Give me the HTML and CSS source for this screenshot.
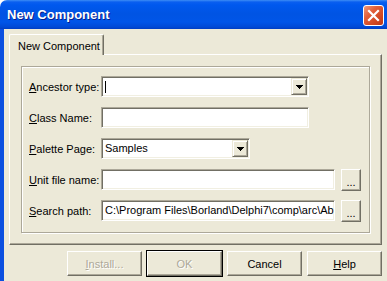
FILE: index.html
```html
<!DOCTYPE html>
<html lang="en">
<head>
    <meta charset="UTF-8">
    <title>New Component</title>
    <link rel="stylesheet" href="styles.css">
</head>
<body>
    <div class="window">
        <div class="titlebar">
            <span class="title">New Component</span>
            <span class="close">
                <svg width="13" height="13" viewBox="0 0 13 13"><path d="M2 2 L11 11 M11 2 L2 11" stroke="#fff" stroke-width="2.2" stroke-linecap="square"/></svg>
            </span>
        </div>
        <div class="frame">
            <div class="client">
                <div class="tabs"><div class="tab">New Component</div></div>
                <div class="page">
                    <div class="group">
                        <div class="row">
                            <label><u>A</u>ncestor type:</label>
                            <div class="field combo w-wide"><span class="caret"></span><span class="drop"><svg width="7" height="4" viewBox="0 0 7 4"><path d="M0 0h7v1H0zM1 1h5v1H1zM2 2h3v1H2zM3 3h1v1H3z" fill="#000"/></svg></span></div>
                        </div>
                        <div class="row">
                            <label><u>C</u>lass Name:</label>
                            <div class="field w-wide"></div>
                        </div>
                        <div class="row">
                            <label><u>P</u>alette Page:</label>
                            <div class="field combo w-mid"><span class="value">Samples</span><span class="drop"><svg width="7" height="4" viewBox="0 0 7 4"><path d="M0 0h7v1H0zM1 1h5v1H1zM2 2h3v1H2zM3 3h1v1H3z" fill="#000"/></svg></span></div>
                        </div>
                        <div class="row">
                            <label><u>U</u>nit file name:</label>
                            <div class="field w-path"></div>
                            <button class="btn dots">...</button>
                        </div>
                        <div class="row">
                            <label><u>S</u>earch path:</label>
                            <div class="field w-path"><span class="value">C:\Program Files\Borland\Delphi7\comp\arc\Ab</span></div>
                            <button class="btn dots">...</button>
                        </div>
                    </div>
                </div>
                <div class="buttons">
                    <button class="btn big disabled"><u>I</u>nstall...</button>
                    <button class="btn big disabled default">OK</button>
                    <button class="btn big">Cancel</button>
                    <button class="btn big"><u>H</u>elp</button>
                </div>
            </div>
        </div>
    </div>
</body>
</html>
```

FILE: styles.css
```css
body {
    margin: 0;
    background: #fff;
    overflow: hidden;
    font-family: 'Liberation Sans', Arial, sans-serif;
    font-size: 11px;
    color: #000;
}
.window {
    width: 387px;
    height: 281px;
    display: flex;
    flex-direction: column;
}
.titlebar {
    height: 29px;
    flex: none;
    display: flex;
    align-items: flex-start;
    justify-content: space-between;
    border-radius: 7px 0 0 0;
    background: linear-gradient(#3d8df5 0, #0a5ff0 2px, #0058ee 5px, #0054e3 14px, #0055e8 22px, #0049d6 27px, #003dc2 29px);
}
.title {
    margin: 7px 0 0 7px;
    color: #fff;
    font-weight: bold;
    font-size: 13px;
    line-height: 16px;
    text-shadow: 1px 1px 0 #0a1e8a;
}
.close {
    margin: 5px 3px 0 0;
    width: 19px;
    height: 19px;
    border: 1px solid #fff;
    border-radius: 3px;
    background: linear-gradient(135deg, #ef9a7c 0, #e2603b 35%, #cf4520 75%, #b8391a 100%);
    display: flex;
    align-items: center;
    justify-content: center;
}
.frame {
    flex: 1;
    display: flex;
    border-left: 4px solid #0b4fe0;
    box-shadow: inset 1px 0 0 #1466ee;
}
.client {
    flex: 1;
    background: #ece9d8;
    padding: 5px 5px 0 5px;
}
.tabs {
    display: flex;
    height: 20px;
}
.tab {
    box-sizing: border-box;
    width: 95px;
    height: 20px;
    padding: 5px 0 0 8px;
    line-height: 13px;
    border-top: 1px solid #fff;
    border-left: 1px solid #fff;
    border-right: 1px solid #716f64;
    box-shadow: inset -1px 0 0 #aca899;
    border-radius: 2px 2px 0 0;
    position: relative;
    z-index: 1;
    background: #ece9d8;
    margin-bottom: -1px;
    height: 21px;
}
.page {
    box-sizing: border-box;
    height: 191px;
    padding: 11px 11px 0 11px;
    border-top: 1px solid #fff;
    border-left: 1px solid #fff;
    border-right: 1px solid #716f64;
    border-bottom: 1px solid #716f64;
    box-shadow: inset -1px -1px 0 #aca899;
}
.group {
    box-sizing: border-box;
    height: 167px;
    border: 1px solid #aca899;
    box-shadow: inset 1px 1px 0 #fff, 1px 1px 0 #fff;
    padding: 9px 0 0 7px;
    display: flex;
    flex-direction: column;
    gap: 10px;
}
.row {
    display: flex;
    align-items: center;
    height: 21px;
}
.row label {
    width: 72px;
    flex: none;
    white-space: nowrap;
}
.field {
    box-sizing: border-box;
    height: 21px;
    background: #fff;
    border-top: 1px solid #aca899;
    border-left: 1px solid #aca899;
    border-right: 1px solid #fff;
    border-bottom: 1px solid #fff;
    box-shadow: inset 1px 1px 0 #716f64, inset -1px -1px 0 #f1efe2;
    display: flex;
    align-items: center;
    overflow: hidden;
    white-space: nowrap;
    padding-left: 3px;
}
.w-wide { width: 208px; }
.w-mid { width: 149px; }
.w-path { width: 234px; }
.value {
    flex: 1;
    overflow: hidden;
    line-height: 13px;
}
.caret {
    width: 1px;
    height: 12px;
    background: #000;
    margin-left: 0;
}
.combo {
    padding-right: 1px;
}
.combo .caret {
    margin-right: auto;
}
.drop {
    box-sizing: border-box;
    width: 16px;
    height: 17px;
    margin-left: auto;
    flex: none;
    background: #ece9d8;
    border-top: 1px solid #ece9d8;
    border-left: 1px solid #ece9d8;
    border-right: 1px solid #716f64;
    border-bottom: 1px solid #716f64;
    box-shadow: inset 1px 1px 0 #fff, inset -1px -1px 0 #aca899;
    display: flex;
    align-items: center;
    justify-content: center;
}
.btn {
    box-sizing: border-box;
    font-family: 'Liberation Sans', Arial, sans-serif;
    font-size: 11px;
    color: #000;
    background: #ece9d8;
    border-top: 1px solid #fff;
    border-left: 1px solid #fff;
    border-right: 1px solid #716f64;
    border-bottom: 1px solid #716f64;
    box-shadow: inset -1px -1px 0 #aca899;
    padding: 0;
    margin: 0;
    border-radius: 0;
}
.dots {
    width: 20px;
    height: 22px;
    margin-left: 6px;
    line-height: 10px;
    padding-top: 4px;
}
.buttons {
    display: flex;
    justify-content: flex-end;
    gap: 5px;
    margin-top: 6px;
}
.big {
    width: 75px;
    height: 25px;
}
.disabled {
    color: #aca899;
    text-shadow: 1px 1px 0 #fff;
}
.default {
    outline: 1px solid #000;
    outline-offset: 0;
}
```
